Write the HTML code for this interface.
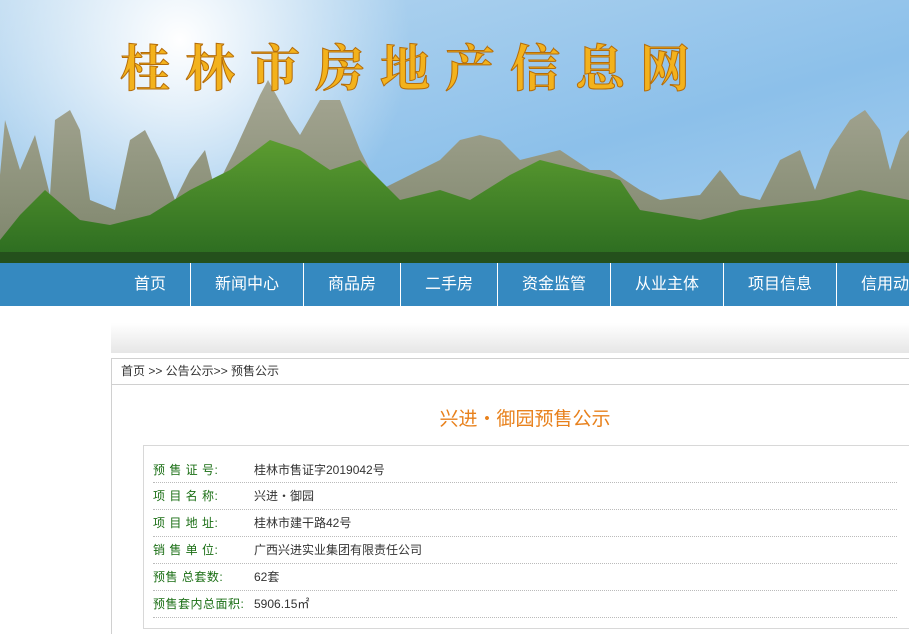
<!DOCTYPE html>
<html><head><meta charset="utf-8"><style>
*{margin:0;padding:0;box-sizing:border-box}
body{width:909px;height:630px;overflow:hidden;background:#fff;font-family:"Liberation Sans","Noto Sans CJK SC",sans-serif;position:relative}
.banner{position:absolute;left:0;top:0;width:909px;height:263px}
.nav{position:absolute;left:0;top:263px;width:909px;height:43px;background:#3589c0}
.nav span{position:absolute;top:0;height:43px;line-height:43px;color:#fff;font-size:16px;text-align:center;border-left:1px solid #fff}
.gbar{position:absolute;left:111px;top:323px;width:798px;height:30px;background:linear-gradient(#fff,#e6e6e6)}
.crumb{position:absolute;left:111px;top:358px;width:800px;height:27px;border:1px solid #d0d0d0;border-right:none;font-size:12px;line-height:25px;padding-left:9px;color:#333;background:#fff}
.cbody{position:absolute;left:111px;top:384px;width:800px;height:250px;border-left:1px solid #d0d0d0}
.title{position:absolute;left:111px;top:404px;width:828px;text-align:center;color:#e8811c;font-size:19px}
.tbl{position:absolute;left:143px;top:445px;width:766px;height:184px;border:1px solid #d8d8d8;border-right:none}
.row{position:absolute;left:9px;width:744px;height:27px;border-bottom:1px dotted #bbb;font-size:12px;line-height:26px}
.row b{font-weight:normal;color:#1a6e14;position:absolute;left:0;letter-spacing:.5px}
.row i{font-style:normal;color:#333;position:absolute;left:101px}
</style></head><body>
<svg class="banner" viewBox="0 0 909 263" width="909" height="263">
<defs>
<linearGradient id="sky" x1="0" y1="0" x2="1" y2="1"><stop offset="0" stop-color="#b9d8f0"/><stop offset=".6" stop-color="#8cc0ea"/><stop offset="1" stop-color="#a9d0ef"/></linearGradient>
<radialGradient id="sun" cx="180" cy="40" r="230" gradientUnits="userSpaceOnUse"><stop offset="0" stop-color="#fff" stop-opacity="1"/><stop offset="1" stop-color="#fff" stop-opacity="0"/></radialGradient>
<linearGradient id="rock" x1="0" y1="0" x2="0" y2="1"><stop offset="0" stop-color="#a6a794"/><stop offset="1" stop-color="#7c846a"/></linearGradient>
<linearGradient id="tree" x1="0" y1="0" x2="0" y2="1"><stop offset="0" stop-color="#5c9c30"/><stop offset="1" stop-color="#2a6a20"/></linearGradient>
</defs>
<rect width="909" height="263" fill="url(#sky)"/>
<rect width="909" height="263" fill="url(#sun)"/>
<g fill="url(#rock)">
<path d="M0 180 L0 175 L5 120 L20 170 L35 135 L50 195 L55 120 L70 110 L80 130 L90 200 L115 210 L130 140 L145 130 L160 160 L175 200 L190 170 L205 150 L215 190 L235 150 L260 95 L268 80 L290 120 L300 135 L320 100 L340 100 L360 150 L380 190 L440 160 L460 140 L480 135 L500 140 L520 160 L560 150 L590 170 L610 170 L640 190 L660 200 L700 195 L720 170 L740 195 L760 200 L780 160 L800 150 L815 190 L830 150 L850 120 L865 110 L880 130 L890 170 L900 140 L909 130 L909 263 L0 263Z"/>
</g>
<path d="M0 240 L20 215 L45 190 L80 220 L110 225 L150 215 L190 190 L230 170 L270 140 L300 150 L330 170 L360 160 L400 200 L440 190 L470 200 L510 175 L540 160 L580 170 L620 180 L640 210 L700 220 L740 210 L780 205 L820 200 L860 190 L909 200 L909 263 L0 263Z" fill="url(#tree)"/>
<rect x="0" y="252" width="909" height="11" fill="#24501c"/>
<text x="120" y="86" font-family="Noto Serif CJK SC,serif" font-size="50" font-weight="bold" fill="#f3b21c" stroke="#b56d0a" stroke-width="1" letter-spacing="15">桂林市房地产信息网</text>
</svg>
<div class="nav">
<span style="left:110px;width:80px;border-left:none">首页</span>
<span style="left:190px;width:113px">新闻中心</span>
<span style="left:303px;width:97px">商品房</span>
<span style="left:400px;width:97px">二手房</span>
<span style="left:497px;width:113px">资金监管</span>
<span style="left:610px;width:113px">从业主体</span>
<span style="left:723px;width:113px">项目信息</span>
<span style="left:836px;width:113px;text-align:left;padding-left:24px">信用动态</span>
</div>
<div class="gbar"></div>
<div class="crumb">首页 &gt;&gt; 公告公示&gt;&gt; 预售公示</div>
<div class="cbody"></div>
<div class="title">兴进・御园预售公示</div>
<div class="tbl">
<div class="row" style="top:10px;height:27px"><b style="top:1px">预 售 证 号:</b><i style="top:1px">桂林市售证字2019042号</i></div>
<div class="row" style="top:37px"><b>项 目 名 称:</b><i>兴进・御园</i></div>
<div class="row" style="top:64px"><b>项 目 地 址:</b><i>桂林市建干路42号</i></div>
<div class="row" style="top:91px"><b>销 售 单 位:</b><i>广西兴进实业集团有限责任公司</i></div>
<div class="row" style="top:118px"><b>预售 总套数:</b><i>62套</i></div>
<div class="row" style="top:145px"><b>预售套内总面积:</b><i>5906.15㎡</i></div>
</div>
</body></html>
